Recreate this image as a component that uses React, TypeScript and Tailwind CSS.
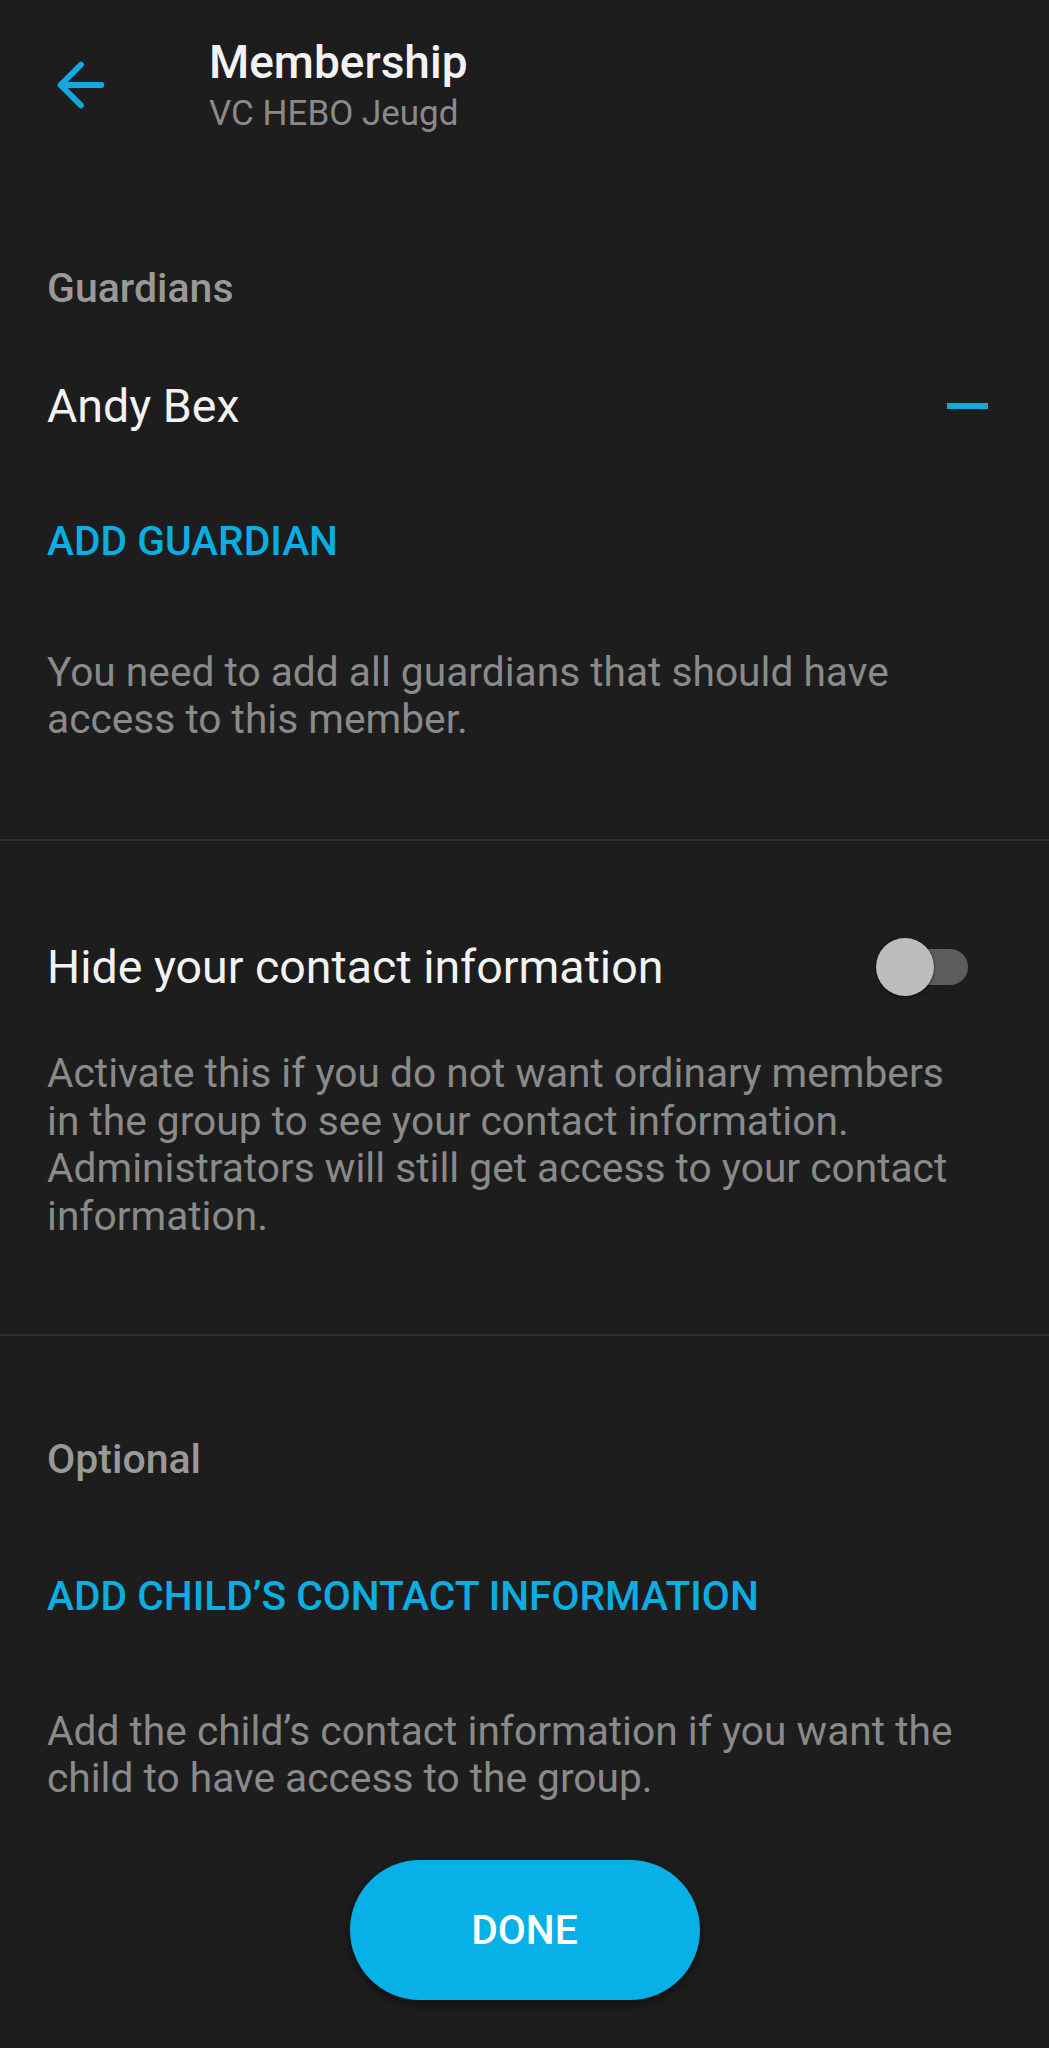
import React, { useState } from "react";

const ArrowBack = () => (
  <svg width="70" height="70" viewBox="0 0 24 24" fill="none">
    <path
      d="M19 12H5M12 5l-7 7 7 7"
      stroke="#14a8de"
      strokeWidth="2"
      strokeLinecap="round"
      strokeLinejoin="round"
    />
  </svg>
);

const Toggle = ({ on, onClick }: { on: boolean; onClick: () => void }) => (
  <button onClick={onClick} className="relative w-[92px] h-[58px] shrink-0">
    <span className="absolute right-0 top-[11px] w-[84px] h-[36px] rounded-full bg-[#5c5c5c]" />
    <span
      className={
        "absolute top-0 w-[58px] h-[58px] rounded-full bg-[#bdbdbd] shadow-[0_1px_3px_rgba(0,0,0,0.6)] " +
        (on ? "right-0" : "left-0")
      }
    />
  </button>
);

export default function App() {
  const [hidden, setHidden] = useState(false);

  return (
    <div className="w-full min-h-[2048px] bg-[#1d1d1d] font-['Roboto',sans-serif] antialiased">
      {/* header */}
      <div className="flex items-start pl-[46px]">
        <div className="mt-[50px]">
          <ArrowBack />
        </div>
        <div className="ml-[93px] pt-[35px] flex flex-col">
          <div className="text-[46px] leading-[54px] font-medium text-[#f2f2f2]">Membership</div>
          <div className="mt-[3px] text-[35px] leading-[44px] text-[#8a8a8a]">VC HEBO Jeugd</div>
        </div>
      </div>

      {/* guardians */}
      <div className="px-[47px] pt-[128px] pb-[96px] border-b-2 border-[#2f2f2f]">
        <div className="text-[41px] leading-[48px] font-medium text-[#999999]">Guardians</div>
        <div className="mt-[67px] flex items-center justify-between pr-[14px]">
          <span className="text-[46.5px] leading-[54px] text-[#f2f2f2]">Andy Bex</span>
          <span className="block w-[41px] h-[6px] bg-[#14a8de]" />
        </div>
        <div className="mt-[84px] text-[40.7px] leading-[48px] font-medium text-[#0aaee3]">ADD GUARDIAN</div>
        <p className="mt-[84px] max-w-[925px] text-[40.7px] leading-[47px] text-[#8a8a8a]">
          You need to add all guardians that should have access to this member.
        </p>
      </div>

      {/* hide contact */}
      <div className="px-[47px] pt-[97px] pb-[94px] border-b-2 border-[#2f2f2f]">
        <div className="flex items-center justify-between pr-[34px]">
          <span className="text-[46.5px] leading-[54px] text-[#f2f2f2]">Hide your contact information</span>
          <Toggle on={hidden} onClick={() => setHidden(!hidden)} />
        </div>
        <p className="mt-[54px] max-w-[925px] text-[40.7px] leading-[47.6px] text-[#8a8a8a]">
          Activate this if you do not want ordinary members in the group to see your contact information.
          Administrators will still get access to your contact information.
        </p>
      </div>

      {/* optional */}
      <div className="px-[47px] pt-[99px]">
        <div className="text-[41px] leading-[48px] font-medium text-[#999999]">Optional</div>
        <div className="mt-[89px] text-[40.7px] leading-[48px] font-medium text-[#0aaee3]">
          ADD CHILD’S CONTACT INFORMATION
        </div>
        <p className="mt-[88px] max-w-[925px] text-[40.7px] leading-[47px] text-[#8a8a8a]">
          Add the child’s contact information if you want the child to have access to the group.
        </p>
      </div>

      <div className="flex justify-center mt-[58px]">
        <button className="w-[350px] h-[140px] rounded-full bg-[#07b0e6] text-white text-[40.7px] font-medium shadow-[0_4px_10px_rgba(0,0,0,0.5)]">
          DONE
        </button>
      </div>
    </div>
  );
}
